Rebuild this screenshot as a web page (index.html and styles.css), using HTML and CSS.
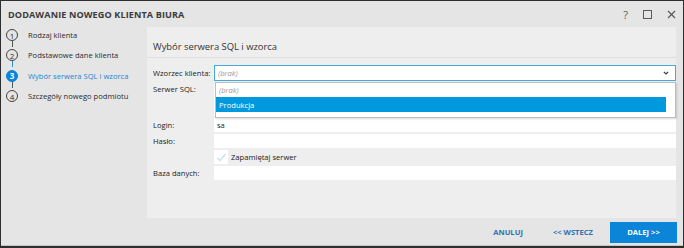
FILE: index.html
```html
<!DOCTYPE html>
<html>
<head>
    <title>Dodawanie nowego klienta biura</title>
    <link rel="stylesheet" href="styles.css">
</head>
<body>
    <div class="window">
        <div class="titlebar">
            <span class="title">DODAWANIE NOWEGO KLIENTA BIURA</span>
            <div class="controls">
                <span class="ctl help">?</span>
                <span class="ctl max"></span>
                <span class="ctl close">
                    <svg width="9" height="9" viewBox="0 0 9 9"><path d="M1 1 L8 8 M8 1 L1 8" stroke="#5a5a5a" stroke-width="1.2" fill="none"/></svg>
                </span>
            </div>
        </div>

        <div class="body">
            <ul class="steps">
                <li class="step done"><span class="num">1</span>Rodzaj klienta</li>
                <li class="step done"><span class="num">2</span>Podstawowe dane klienta</li>
                <li class="step active"><span class="num">3</span>Wybór serwera SQL i wzorca</li>
                <li class="step"><span class="num">4</span>Szczegóły nowego podmiotu</li>
            </ul>

            <div class="main">
                <div class="panel">
                    <h2 class="heading">Wybór serwera SQL i wzorca</h2>

                    <div class="form">
                        <div class="row combo-row">
                            <label>Wzorzec klienta:</label>
                            <div class="field combo">
                                <span class="placeholder">(brak)</span>
                                <svg class="chevron" width="6" height="4" viewBox="0 0 6 4"><path d="M0.8 0.8 L3 3 L5.2 0.8" stroke="#333" stroke-width="1.1" fill="none"/></svg>
                                <ul class="dropdown">
                                    <li class="placeholder">(brak)</li>
                                    <li class="selected">Produkcja</li>
                                </ul>
                            </div>
                        </div>
                        <div class="row tall">
                            <label>Serwer SQL:</label>
                            <div class="field"></div>
                        </div>
                        <div class="row">
                            <label>Login:</label>
                            <div class="field">sa</div>
                        </div>
                        <div class="row">
                            <label>Hasło:</label>
                            <div class="field"></div>
                        </div>
                        <div class="row">
                            <label></label>
                            <div class="check-wrap">
                                <span class="checkbox">
                                    <svg width="14" height="14" viewBox="0 0 14 14"><path d="M3 8 L6 10.5 L11.5 4" stroke="#c6e3f4" stroke-width="1.4" fill="none"/></svg>
                                </span>
                                <span>Zapamiętaj serwer</span>
                            </div>
                        </div>
                        <div class="row">
                            <label>Baza danych:</label>
                            <div class="field"></div>
                        </div>
                    </div>
                </div>

                <div class="footer">
                    <button class="link">ANULUJ</button>
                    <button class="link">&lt;&lt; WSTECZ</button>
                    <button class="primary">DALEJ &gt;&gt;</button>
                </div>
            </div>
        </div>
    </div>
</body>
</html>
```

FILE: styles.css
```css
* { box-sizing: border-box; }
body { margin: 0; font-family: "Open Sans", "Noto Sans", sans-serif; color: #333; }

.window { width: 684px; height: 248px; background: #e5e5e5; border: 1px solid #2e2e2e; border-bottom: 2px solid #2e2e2e; box-shadow: inset 0 -1px 0 #c4c4c4; display: flex; flex-direction: column; }

.titlebar { height: 26px; display: flex; align-items: center; justify-content: space-between; padding: 0 7px 0 7px; }
.title { font-size: 9.1px; font-weight: bold; color: #3c3c3c; letter-spacing: 0.1px; }
.controls { display: flex; align-items: center; gap: 15px; }
.ctl { display: flex; align-items: center; justify-content: center; color: #5a5a5a; font-size: 11px; }
.max { width: 9px; height: 9px; border: 1.5px solid #5a5a5a; }

.body { flex: 1; display: flex; }

.steps { width: 146px; list-style: none; margin: -2px 0 0 0; padding: 0 0 0 5px; }
.step { position: relative; display: flex; align-items: center; height: 20.3px; font-size: 7.6px; color: #2b2b2b; }
.step .num { width: 12px; height: 12px; border: 1px solid #444; border-radius: 50%; display: flex; align-items: center; justify-content: center; font-size: 8px; margin-right: 10px; background: #e5e5e5; position: relative; z-index: 1; }
.step:not(:last-child)::after { content: ""; position: absolute; left: 5.5px; top: 14px; height: 8px; width: 1px; background: #555; }
.step.done:nth-child(2)::after { background: #2a8fd6; }
.step.active { color: #1b86d4; }
.step.active .num { background: #0a84d6; border-color: #0a84d6; color: #fff; font-weight: bold; }

.main { flex: 1; display: flex; flex-direction: column; }
.panel { flex: 1; background: #eeeeee; margin-right: 7px; }
.heading { margin: 0; font-size: 9.4px; line-height: 13px; font-weight: normal; color: #333; padding: 13px 6px 4px; border-bottom: 1px solid #dedede; }

.form { padding: 7px 0 0 6px; display: flex; flex-direction: column; gap: 2px; }
.row { display: flex; align-items: center; height: 14px; font-size: 7.6px; }
.row.combo-row { height: 16px; }
.row.tall { height: 33px; align-items: flex-start; }
.row label { width: 61px; flex: none; color: #222; }
.row.tall label { padding-top: 1px; }
.field { flex: 1; height: 100%; background: #fff; padding: 0 3px; display: flex; align-items: center; color: #222; }

.combo { position: relative; border: 1px solid #47a7df; justify-content: space-between; }
.placeholder { color: #9a9a9a; font-style: italic; }
.chevron { margin-right: 3px; }
.dropdown { position: absolute; left: 0; top: 16px; right: -1px; height: 36px; margin: 0; padding: 0 9px 0 0; list-style: none; background: #fff; border: 1px solid #bdbdbd; box-shadow: 1px 1px 2px rgba(0,0,0,0.15); z-index: 2; }
.dropdown li { height: 14px; display: flex; align-items: center; padding-left: 3px; }
.dropdown .selected { height: 15px; background: #0099dd; color: #fff; }

.check-wrap { display: flex; align-items: center; gap: 3px; color: #222; }
.checkbox { width: 14px; height: 14px; background: #fff; display: flex; }

.footer { height: 28px; display: flex; align-items: center; justify-content: flex-end; padding-right: 6px; }
button { font-family: inherit; font-size: 7.6px; font-weight: bold; border: none; cursor: pointer; }
.link { background: none; color: #2f73b2; padding: 0 15px; height: 21px; }
.primary { background: #0a85d7; color: #fff; width: 67px; height: 21px; margin-left: 2px; }
```
